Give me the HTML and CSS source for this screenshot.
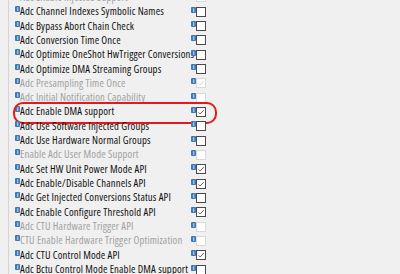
FILE: index.html
```html
<!DOCTYPE html>
<html lang="en">
<head>
    <meta charset="UTF-8">
    <title>Adc General</title>
    <link rel="stylesheet" href="styles.css">
</head>
<body>
    <div class="panel">
        <div class="list">
            <div class="row off"><span class="name"><i class="info">i</i>Adc Enable Injected Support</span><span class="value"><i class="info">i</i><span class="box"></span></span></div>
            <div class="row"><span class="name"><i class="info">i</i>Adc Channel Indexes Symbolic Names</span><span class="value"><i class="info">i</i><span class="box"></span></span></div>
            <div class="row"><span class="name"><i class="info">i</i>Adc Bypass Abort Chain Check</span><span class="value"><i class="info">i</i><span class="box"></span></span></div>
            <div class="row"><span class="name"><i class="info">i</i>Adc Conversion Time Once</span><span class="value"><i class="info">i</i><span class="box"></span></span></div>
            <div class="row"><span class="name"><i class="info">i</i>Adc Optimize OneShot HwTrigger Conversions</span><span class="value"><i class="info">i</i><span class="box"></span></span></div>
            <div class="row"><span class="name"><i class="info">i</i>Adc Optimize DMA Streaming Groups</span><span class="value"><i class="info">i</i><span class="box"></span></span></div>
            <div class="row off"><span class="name"><i class="info">i</i>Adc Presampling Time Once</span><span class="value"><i class="info">i</i><span class="box checked"><svg viewBox="0 0 10 10"><polyline points="2,5.5 4,7.5 8.5,2.5"/></svg></span></span></div>
            <div class="row off"><span class="name"><i class="info">i</i>Adc Initial Notification Capability</span><span class="value"><i class="info">i</i><span class="box"></span></span></div>
            <div class="row marked"><span class="name"><i class="info">i</i>Adc Enable DMA support</span><span class="value"><i class="info">i</i><span class="box checked"><svg viewBox="0 0 10 10"><polyline points="2,5.5 4,7.5 8.5,2.5"/></svg></span></span><span class="ring"></span></div>
            <div class="row"><span class="name"><i class="info">i</i>Adc Use Software Injected Groups</span><span class="value"><i class="info">i</i><span class="box"></span></span></div>
            <div class="row"><span class="name"><i class="info">i</i>Adc Use Hardware Normal Groups</span><span class="value"><i class="info">i</i><span class="box"></span></span></div>
            <div class="row off"><span class="name"><i class="info">i</i>Enable Adc User Mode Support</span><span class="value"><i class="info">i</i><span class="box"></span></span></div>
            <div class="row"><span class="name"><i class="info">i</i>Adc Set HW Unit Power Mode API</span><span class="value"><i class="info">i</i><span class="box checked"><svg viewBox="0 0 10 10"><polyline points="2,5.5 4,7.5 8.5,2.5"/></svg></span></span></div>
            <div class="row"><span class="name"><i class="info">i</i>Adc Enable/Disable Channels API</span><span class="value"><i class="info">i</i><span class="box checked"><svg viewBox="0 0 10 10"><polyline points="2,5.5 4,7.5 8.5,2.5"/></svg></span></span></div>
            <div class="row"><span class="name"><i class="info">i</i>Adc Get Injected Conversions Status API</span><span class="value"><i class="info">i</i><span class="box"></span></span></div>
            <div class="row"><span class="name"><i class="info">i</i>Adc Enable Configure Threshold API</span><span class="value"><i class="info">i</i><span class="box checked"><svg viewBox="0 0 10 10"><polyline points="2,5.5 4,7.5 8.5,2.5"/></svg></span></span></div>
            <div class="row off"><span class="name"><i class="info">i</i>Adc CTU Hardware Trigger API</span><span class="value"><i class="info">i</i><span class="box"></span></span></div>
            <div class="row off"><span class="name"><i class="info">i</i>CTU Enable Hardware Trigger Optimization</span><span class="value"><i class="info">i</i><span class="box"></span></span></div>
            <div class="row"><span class="name"><i class="info">i</i>Adc CTU Control Mode API</span><span class="value"><i class="info">i</i><span class="box checked"><svg viewBox="0 0 10 10"><polyline points="2,5.5 4,7.5 8.5,2.5"/></svg></span></span></div>
            <div class="row"><span class="name"><i class="info">i</i>Adc Bctu Control Mode Enable DMA support</span><span class="value"><i class="info">i</i><span class="box"></span></span></div>
        </div>
    </div>
</body>
</html>
```

FILE: styles.css
```css
html, body {
    margin: 0;
    padding: 0;
    height: 100%;
    overflow: hidden;
    background-color: #f0f0f0;
}

.panel {
    height: 100%;
    padding-left: 8px;
    font-family: 'Open Sans', 'Noto Sans', sans-serif;
    font-stretch: condensed;
    font-size: 10.7px;
    letter-spacing: 0.16px;
    color: #111;
}

.list {
    border-left: 1px solid #d4d4d4;
    margin-top: -10.3px;
    min-height: 300px;
}

.row {
    position: relative;
    display: flex;
    align-items: center;
    height: 14.33px;
}

.name {
    display: flex;
    align-items: flex-start;
    flex: 0 0 182px;
    min-width: 0;
    box-sizing: border-box;
    padding-left: 6px;
    white-space: nowrap;
    line-height: 14px;
}

.value {
    display: flex;
    align-items: flex-start;
    height: 11px;
}

.info {
    display: inline-block;
    flex: none;
    width: 5px;
    height: 6px;
    margin-top: 1px;
    background-color: #3d78b5;
    border-radius: 1px;
    color: white;
    font-style: normal;
    font-size: 5px;
    letter-spacing: 0;
    line-height: 6px;
    text-align: center;
    font-weight: bold;
    overflow: hidden;
}

.name .info {
    margin-top: 2px;
}

.box {
    display: inline-block;
    width: 8px;
    height: 8px;
    margin-top: 1px;
    border: 1px solid #4a4a4a;
    background-color: #fff;
}

.box svg {
    display: block;
    width: 8px;
    height: 8px;
}

.box polyline {
    fill: none;
    stroke: #404040;
    stroke-width: 1;
}

.off .name {
    color: #a2a2a2;
}

.off .box {
    border-color: #d8d8d8;
}

.off .box polyline {
    stroke: #c8c8c8;
}

.ring {
    position: absolute;
    left: 4px;
    top: -2.5px;
    width: 204px;
    height: 22px;
    box-sizing: border-box;
    border: 2.5px solid #e3191d;
    border-radius: 10px;
}
```
